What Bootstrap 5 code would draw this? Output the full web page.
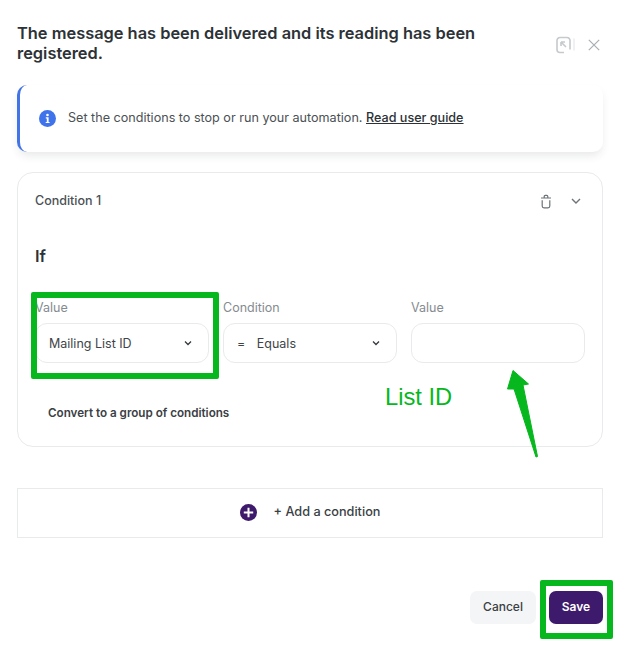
<!DOCTYPE html>
<html lang="en">
<head>
    <meta charset="UTF-8">
    <meta name="viewport" content="width=device-width, initial-scale=1">
    <title>Condition settings</title>
    <link rel="stylesheet" href="https://cdn.jsdelivr.net/npm/bootstrap@5.3.0/dist/css/bootstrap.min.css">
    <style>
        body {
            font-family: Inter, "Liberation Sans", sans-serif;
            background: #fff;
            color: #2c3236;
            height: 661px;
            overflow: hidden;
        }
        .page-wrap {
            position: relative;
            height: 661px;
            padding: 23px 26px 0 17px;
        }
        .modal-title-text {
            width: 480px;
            font-size: 16.4px;
            line-height: 20px;
            font-weight: 600;
            margin: 0;
        }
        .head-icons {
            margin-top: 13px;
            margin-right: 3px;
            gap: 12px;
        }
        .info-box {
            height: 67px;
            margin-top: 22px;
            padding-left: 19px;
            gap: 12px;
            border-left: 3px solid #4274e8;
            border-radius: 10px;
            box-shadow: 0 5px 10px -2px rgba(40, 50, 60, .12);
            font-size: 12.6px;
            color: #4b5155;
        }
        .info-box a {
            color: #2c3236;
            font-weight: 500;
        }
        .cond-box {
            height: 275px;
            margin-top: 20px;
            padding: 19px 17px 0;
            border: 1px solid #e8eaec;
            border-radius: 16px;
        }
        .cond-title {
            font-size: 12.5px;
            font-weight: 500;
            color: #4b5155;
        }
        .cond-tools {
            gap: 17px;
            margin-right: 3px;
        }
        .if-label {
            margin-top: 35px;
            font-size: 16.5px;
            font-weight: 600;
            line-height: 20px;
        }
        .field-row {
            margin-top: 34px;
            gap: 14px;
        }
        .field-col {
            width: 174px;
        }
        .field-label {
            font-size: 12.5px;
            line-height: 16px;
            color: #858b90;
            margin-bottom: 7px;
        }
        .field-box {
            height: 40px;
            padding: 0 15px 0 13px;
            border: 1px solid #e8eaec;
            border-radius: 12px;
            font-size: 12.5px;
            color: #3e4448;
        }
        .field-text {
            padding-top: 4px;
        }
        .convert-text {
            margin: 42px 0 0 13px;
            font-size: 11.65px;
            line-height: 16px;
            font-weight: 600;
            color: #3a4044;
        }
        .add-box {
            height: 50px;
            margin-top: 41px;
            padding-bottom: 2px;
            gap: 17px;
            border: 1px solid #e8eaec;
            font-size: 12.7px;
            font-weight: 500;
            color: #3a4044;
        }
        .foot-row {
            margin-top: 53px;
            gap: 13px;
        }
        .btn-cancel, .btn-save {
            height: 33px;
            padding: 0 0 1px;
            border: 0;
            border-radius: 7px;
            font-size: 12px;
            font-weight: 500;
        }
        .btn-cancel {
            width: 66px;
            background: #f3f5f6;
            color: #3a4044;
        }
        .btn-save {
            width: 54px;
            background: #3d1a6b;
            color: #fff;
            font-weight: 600;
        }
        .green-frame {
            position: absolute;
            border: 6px solid #06b71e;
            border-radius: 2px;
        }
        .frame-one {
            left: 31px;
            top: 292px;
            width: 188px;
            height: 87px;
        }
        .frame-two {
            left: 540px;
            top: 580px;
            width: 73px;
            height: 59px;
        }
        .list-id-note {
            position: absolute;
            left: 385px;
            top: 383px;
            font-family: "Liberation Sans", Arial, sans-serif;
            font-size: 23.7px;
            line-height: 29px;
            color: #06b71e;
        }
        .green-arrow {
            position: absolute;
            left: 500px;
            top: 365px;
        }
    </style>
</head>
<body>

<div class="page-wrap">
    <!-- Header -->
    <div class="d-flex justify-content-between align-items-start">
        <h1 class="modal-title-text">The message has been delivered and its reading has been registered.</h1>
        <div class="head-icons d-flex align-items-center">
            <svg width="20" height="18" viewBox="0 0 20 18" fill="none" stroke="#c6cacd" stroke-width="1.6">
                <path d="M8 16.5H4a3 3 0 0 1-3-3V4.500a3 3 0 0 1 3-3h7a3 3 0 0 1 3 3v9"/>
                <path d="M5 6l5 5M5 6v4M5 6h4"/>
                <path d="M18 2.500v12" stroke="#e0e2e4" stroke-width="1"/>
            </svg>
            <svg width="12" height="12" viewBox="0 0 12 12" fill="none" stroke="#a9aeb3" stroke-width="1.2">
                <path d="M.8 .8l10.400 10.400M11.200 .8L.8 11.200"/>
            </svg>
        </div>
    </div>

    <!-- Info -->
    <div class="info-box d-flex align-items-center bg-white">
        <svg width="17" height="17" viewBox="0 0 17 17">
            <circle cx="8.500" cy="8.500" r="8.500" fill="#3f73ec"/>
            <circle cx="8.500" cy="5" r="1.300" fill="#fff"/>
            <path d="M6.800 7.300h2.800v4.600h1v1.200H6.700v-1.200h1.100V8.500h-1z" fill="#fff"/>
        </svg>
        <span>Set the conditions to stop or run your automation. <a href="#">Read user guide</a></span>
    </div>

    <!-- Condition -->
    <div class="cond-box">
        <div class="d-flex justify-content-between align-items-center">
            <span class="cond-title">Condition 1</span>
            <div class="cond-tools d-flex align-items-center">
                <svg width="14" height="15" viewBox="0 0 14 15" fill="none" stroke="#6d7378" stroke-width="1.2">
                    <path d="M2 4h10M5.200 4V2.400a1 1 0 0 1 1-1h1.600a1 1 0 0 1 1 1V4"/>
                    <path d="M3.200 6.200v5.800a1.800 1.800 0 0 0 1.800 1.800h4a1.800 1.800 0 0 0 1.800-1.800V6.200"/>
                </svg>
                <svg width="12" height="12" viewBox="0 0 12 12" fill="none" stroke="#6d7378" stroke-width="1.4">
                    <path d="M2 4l4 4 4-4"/>
                </svg>
            </div>
        </div>

        <div class="if-label">If</div>

        <div class="field-row d-flex">
            <div class="field-col">
                <div class="field-label">Value</div>
                <div class="field-box d-flex align-items-center justify-content-between">
                    <span class="field-text">Mailing List ID</span>
                    <svg width="10" height="10" viewBox="0 0 10 10" fill="none" stroke="#33393d" stroke-width="1.3">
                        <path d="M2 3.500L5 6.500l3-3"/>
                    </svg>
                </div>
            </div>
            <div class="field-col">
                <div class="field-label">Condition</div>
                <div class="field-box d-flex align-items-center justify-content-between">
                    <span class="field-text"><span class="me-2">=</span> Equals</span>
                    <svg width="10" height="10" viewBox="0 0 10 10" fill="none" stroke="#33393d" stroke-width="1.3">
                        <path d="M2 3.500L5 6.500l3-3"/>
                    </svg>
                </div>
            </div>
            <div class="field-col">
                <div class="field-label">Value</div>
                <div class="field-box"></div>
            </div>
        </div>

        <div class="convert-text">Convert to a group of conditions</div>
    </div>

    <!-- Add condition -->
    <div class="add-box d-flex align-items-center justify-content-center">
        <svg width="17" height="17" viewBox="0 0 17 17">
            <circle cx="8.500" cy="8.500" r="8.500" fill="#3d1a6b"/>
            <path d="M8.500 3.800v9.400M3.800 8.500h9.400" stroke="#fff" stroke-width="2"/>
        </svg>
        <span>+ Add a condition</span>
    </div>

    <!-- Footer -->
    <div class="foot-row d-flex justify-content-end">
        <button type="button" class="btn btn-cancel">Cancel</button>
        <button type="button" class="btn btn-save">Save</button>
    </div>

    <!-- Annotations drawn over the screenshot -->
    <div class="green-frame frame-one"></div>
    <div class="green-frame frame-two"></div>
    <div class="list-id-note">List ID</div>
    <svg class="green-arrow" width="50" height="96" viewBox="0 0 50 96">
        <path d="M13 5.500L28.500 19 23 20 37.500 91.500 36 92 14 24 7.500 24z" fill="#06b71e" stroke="#06b71e" stroke-width="1" stroke-linejoin="round"/>
    </svg>
</div>

</body>
</html>
